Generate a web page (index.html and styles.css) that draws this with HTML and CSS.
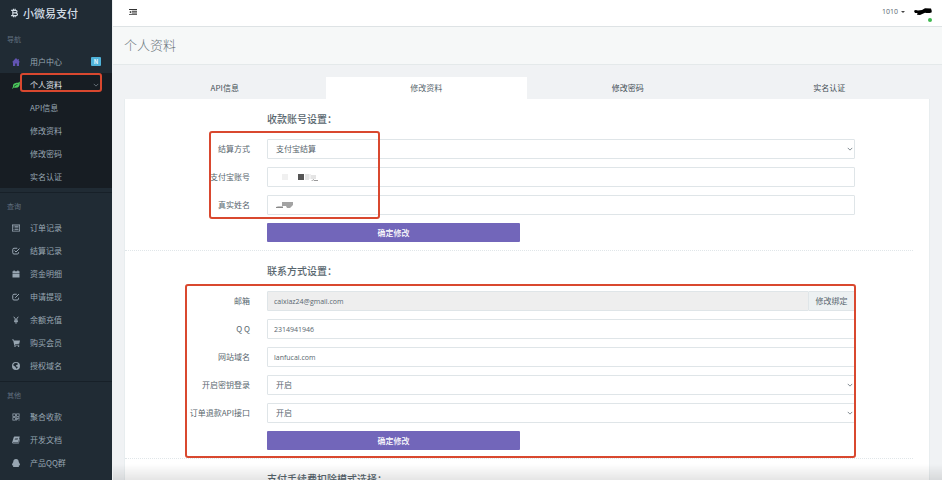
FILE: index.html
```html
<!DOCTYPE html>
<html lang="zh-CN">
<head>
<meta charset="utf-8">
<title>个人资料</title>
<link rel="stylesheet" href="styles.css">
</head>
<body>
<div class="app">
  <aside class="sidebar">
    <a class="brand" href="#"><svg class="brand-icon" viewBox="0 0 16 16" fill="none" stroke="currentColor" stroke-width="2"><path d="M2 3.3h7.3c4.4 0 4.4 4.5 0 4.5H5M5 3v10M2 12.7h7.8c4.8 0 4.6-4.9-.3-4.9M6.2.5v3M9.2.5v3M6.2 12.5v3M9.2 12.5v3"/></svg>小微易支付</a>
    <nav>
      <h2 class="nav-title">导航</h2>
      <ul class="nav">
        <li><a href="#"><svg class="icon violet" viewBox="0 0 16 16"><path d="M8 0 0 8.5h2V16h4.500v-5h3v5H14V8.500h2L13.500 5.700V2h-2v1.800z"/></svg>用户中心<span class="badge">N</span></a></li>
        <li class="open">
          <a class="current" href="#"><svg class="icon green" viewBox="0 0 16 16"><path fill-rule="evenodd" d="M15.500 1C16.500 8 14 14 7 13.500c-1.700-.1-2.700-.8-3.600-.5L1.300 15.500 0 14.300l2-2.300C1 5 7 4 10 3.700c3-.3 4-1 5.500-2.700zM4.500 11.300C6.500 9 8.500 7.800 11.500 7.300l-.2-1C8 6.800 5.500 8 3.800 10.500z"/></svg>个人资料<svg class="chevron" viewBox="0 0 8 8"><path d="m1 2.500 3 3 3-3"/></svg></a>
          <ul class="subnav">
            <li><a href="#">API信息</a></li>
            <li><a href="#">修改资料</a></li>
            <li><a href="#">修改密码</a></li>
            <li><a href="#">实名认证</a></li>
          </ul>
          <span class="mark mark-nav"></span>
        </li>
      </ul>
      <h2 class="nav-title ruled">查询</h2>
      <ul class="nav">
        <li><a href="#"><svg class="icon" viewBox="0 0 16 16"><path fill-rule="evenodd" d="M0 1h16v14H0zM1.500 3v10.500h13V3zM3 4h2v1.500H3zM6 4h7v1.500H6zM3 7h2v1.500H3zM6 7h7v1.500H6zM3 10h2v1.500H3zM6 10h7v1.500H6z"/></svg>订单记录</a></li>
        <li><a href="#"><svg class="icon line" viewBox="0 0 16 16"><path d="M10.500 2.500H4Q1.500 2.500 1.500 5v6.500Q1.500 14 4 14h6.500q2.500 0 2.500-2.500V10M5 7l3 3 7-7"/></svg>结算记录</a></li>
        <li><a href="#"><svg class="icon" viewBox="0 0 16 16"><path d="M1 2.500h2V1h2.500v1.500h5V1H13v1.500h2V6H1zM1 7h14v8H1z"/></svg>资金明细</a></li>
        <li><a href="#"><svg class="icon line" viewBox="0 0 16 16"><path d="M9.500 2.500H4Q1.500 2.500 1.500 5v6.500Q1.500 14 4 14h6.500q2.500 0 2.500-2.500V9.500M6.500 9.500l7.500-7.500"/></svg>申请提现</a></li>
        <li><a href="#"><svg class="icon line" viewBox="0 0 16 16"><path d="m3.500 1.500 4.500 6 4.500-6M8 7.500v8M4 8.300h8M4 11.300h8"/></svg>余额充值</a></li>
        <li><a href="#"><svg class="icon" viewBox="0 0 16 16"><path d="M0 1h3.500l.6 2H16l-1.500 6.500-8.800.8.3 1.200h8.500V13H4.500L2.400 2.500H0z"/><circle cx="6" cy="14.300" r="1.500"/><circle cx="13" cy="14.300" r="1.500"/></svg>购买会员</a></li>
        <li><a href="#"><svg class="icon" viewBox="0 0 16 16"><path fill-rule="evenodd" d="M8 0a8 8 0 1 0 0 16A8 8 0 0 0 8 0zm.5 1.500 3.500 1.800-1.500 2.700H8.800L7.500 8.500l3.500 1 .5 1.500-3 2.700-1.200-3L4.500 8 2.200 6.500C3.500 3 6 1.500 8.500 1.500z"/></svg>授权域名</a></li>
      </ul>
      <h2 class="nav-title ruled">其他</h2>
      <ul class="nav">
        <li><a href="#"><svg class="icon" viewBox="0 0 16 16"><path fill-rule="evenodd" d="M1 1h6.500v6.500H1zm1.500 1.500V6H6V2.500zM8.500 1H15v6.500H8.500zM10 2.500V6h3.500V2.500zM1 8.500h6.500V15H1zM2.500 10v3.500H6V10zM8.500 8.500h2v2h2v-2H15v3h-3V13h-2v2H8.500zM13 13h2v2h-2z"/></svg>聚合收款</a></li>
        <li><a href="#"><svg class="icon" viewBox="0 0 16 16"><path fill-rule="evenodd" d="M5 1h10.500L12.500 13H2.500c-.8 0-.8 1 0 1H13l2-8 1 .5L13.600 15H2.200C.5 15 0 13.500.5 12L3.500 2.500Q4 1 5 1zm1.500 3-.3 1H12l.3-1zM5.700 6.500l-.3 1h5.800l.3-1z"/></svg>开发文档</a></li>
        <li><a href="#"><svg class="icon" viewBox="0 0 16 16"><path d="M8 0c3.500 0 5.500 2.500 5.500 6C15.500 9 16.500 11 15.800 13l-1.500-.5-.8 1.200c1 .7.6 2.300-1 2.300h-9c-1.600 0-2-1.600-1-2.300l-.8-1.200L.2 13C-.5 11 .5 9 2.500 6 2.500 2.500 4.500 0 8 0z"/></svg>产品QQ群</a></li>
      </ul>
    </nav>
  </aside>
  <div class="main">
    <header class="topbar">
      <button class="toggle" type="button" aria-label="菜单"><svg viewBox="0 0 16 12"><path d="M0 0h16v2H0zM6 3.500h10v2H6zM6 7h10v2H6zM0 10.300h16v1.700H0zM4.500 3.300v5.500L.500 6z"/></svg></button>
      <button class="user" type="button">1010<span class="caret"></span><span class="avatar"><svg viewBox="0 0 18 8"><path d="M0 3Q1 1.500 4 2.500L8 2 11 .3 17 .5q1 2 .5 4-3 1-6.500.3L6 7 3 6.800 3.500 5 1 5z"/></svg><i class="status"></i></span></button>
    </header>
    <h1 class="page-title">个人资料</h1>
    <main class="content">
      <div class="tabs">
        <a href="#">API信息</a>
        <a class="active" href="#">修改资料</a>
        <a href="#">修改密码</a>
        <a href="#">实名认证</a>
      </div>
      <div class="panel">
        <form class="section">
          <h3>收款账号设置：</h3>
          <div class="row">
            <label for="method">结算方式</label>
            <div class="field"><select id="method"><option>支付宝结算</option></select><svg class="chevron" viewBox="0 0 8 8"><path d="m1 2.500 3 3 3-3"/></svg></div>
          </div>
          <div class="row">
            <label for="account">支付宝账号</label>
            <div class="field"><input id="account" type="text"><svg class="mask" viewBox="0 0 48 12"><path fill="#f0f0f0" d="M8 3h6v6H8zM31 3h6v5h-6z"/><path fill="#e4e4e4" d="M31 3h4v6h-4zM37 4h5v4h-5z"/><path fill="#555" d="M24 3h6v6h-6z"/><path fill="#999" d="m37 10 3-2v1l-2 1zM40 9h4v1h-4z"/></svg></div>
          </div>
          <div class="row">
            <label for="realname">真实姓名</label>
            <div class="field"><input id="realname" type="text"><svg class="mask" viewBox="0 0 48 12"><path fill="#a3a3a3" d="M8 3h11v3l-3 3h-3L12 7H8z"/><path fill="#888" d="m2 8 2-.5h5V9H2z"/></svg></div>
          </div>
          <div class="row"><button class="submit" type="submit">确定修改</button></div>
          <span class="mark mark-account"></span>
        </form>
        <form class="section">
          <h3>联系方式设置：</h3>
          <div class="row">
            <label for="email">邮箱</label>
            <div class="field"><input id="email" type="text" value="caixiaz24@gmail.com" disabled><button class="addon" type="button">修改绑定</button></div>
          </div>
          <div class="row">
            <label for="qq">Q Q</label>
            <div class="field"><input id="qq" type="text" value="2314941946"></div>
          </div>
          <div class="row">
            <label for="domain">网站域名</label>
            <div class="field"><input id="domain" type="text" value="lanfucai.com"></div>
          </div>
          <div class="row">
            <label for="keylogin">开启密钥登录</label>
            <div class="field"><select id="keylogin"><option>开启</option></select><svg class="chevron" viewBox="0 0 8 8"><path d="m1 2.500 3 3 3-3"/></svg></div>
          </div>
          <div class="row">
            <label for="refund">订单退款API接口</label>
            <div class="field"><select id="refund"><option>开启</option></select><svg class="chevron" viewBox="0 0 8 8"><path d="m1 2.500 3 3 3-3"/></svg></div>
          </div>
          <div class="row"><button class="submit" type="submit">确定修改</button></div>
          <span class="mark mark-contact"></span>
        </form>
        <section class="section">
          <h3>支付手续费扣除模式选择：</h3>
        </section>
      </div>
    </main>
  </div>
  <div class="fade"></div>
</div>
</body>
</html>
```
FILE: styles.css
```css
* { box-sizing: border-box; }
body {
  margin: 0;
  font: 8px/12px "Noto Sans CJK SC", sans-serif;
  color: #58666e;
  background: #f0f2f4;
}
a { color: inherit; text-decoration: none; }
ul { margin: 0; padding: 0; list-style: none; }
h1, h2, h3 { margin: 0; font-weight: 400; }
button, input, select { font: inherit; color: inherit; margin: 0; }
button { border: 0; background: none; padding: 0; }

.app { display: flex; height: 100vh; overflow: hidden; }

/* Sidebar */
.sidebar {
  flex: 0 0 113px;
  height: max-content;
  min-height: 100%;
  background: #202b34;
  color: #98a6b2;
  border-right: 1px solid #eef1f2;
}
.brand {
  display: flex;
  align-items: center;
  gap: 4px;
  height: 25px;
  padding-left: 10px;
  font-size: 11px;
  font-weight: 500;
  color: #d2dce4;
}
.brand-icon { width: 9px; height: 10px; }
.nav-title {
  height: 25px;
  padding: 2px 7px 0;
  font-size: 7px;
  line-height: 24px;
  color: #617080;
}
.nav-title.ruled {
  height: 24px;
  margin-top: 4px;
  padding-top: 1px;
  border-top: 1px solid #172028;
}
.nav a {
  position: relative;
  display: flex;
  align-items: center;
  height: 23px;
  padding: 0 11px 0 12px;
}
.icon { width: 8px; height: 8px; margin-right: 10px; fill: currentColor; }
.icon.line { fill: none; stroke: currentColor; stroke-width: 2; }
.icon.violet { color: #6254b2; }
.icon.green { color: #4cc95c; }
.badge {
  margin-left: auto;
  width: 10px;
  border-radius: 1px;
  background: #4fb3da;
  color: #e8f7fd;
  font-size: 6px;
  font-weight: 700;
  line-height: 9px;
  text-align: center;
}
.open { position: relative; background: #171d23; }
.nav .current { padding-right: 13px; color: #e4eaee; }
.current .chevron { margin-left: auto; color: #7d8790; }
.nav .subnav a { padding-left: 30px; }
.chevron {
  width: 6px;
  height: 6px;
  fill: none;
  stroke: currentColor;
  stroke-width: 1;
}

/* Highlight frames */
.mark {
  position: absolute;
  border: 2px solid #d9482f;
  border-radius: 3px;
  pointer-events: none;
}
.mark-nav { top: 0; left: 20px; right: 10px; height: 19px; }
.mark-account { left: 84px; width: 171px; top: 32px; height: 88px; }
.mark-contact { left: 60px; right: 57px; top: 33px; bottom: 0; }

/* Main column */
.main { flex: 1; min-width: 0; }
.topbar {
  display: flex;
  justify-content: space-between;
  align-items: center;
  height: 27px;
  padding: 0 10px 2px 16px;
  background: #fff;
  border-bottom: 1px solid #dee3e5;
}
.toggle svg { display: block; width: 8px; height: 6px; fill: #333; }
.user {
  display: flex;
  align-items: center;
  font: 7px/12px "Open Sans", sans-serif;
}
.caret {
  margin-left: 3px;
  border: 2px solid transparent;
  border-top-color: #444;
  border-bottom: 0;
}
.avatar { position: relative; margin-left: 9px; }
.avatar svg { display: block; width: 18px; height: 8px; }
.status {
  position: absolute;
  right: 0;
  top: 10px;
  width: 4px;
  height: 4px;
  border-radius: 50%;
  background: #3fb950;
}
.page-title {
  height: 38px;
  padding-left: 11px;
  border-bottom: 1px solid #e4e9ea;
  background: #f6f8f8;
  color: #69757c;
  font-size: 13px;
  font-weight: 300;
  line-height: 36px;
}
.content { padding: 12px 12px 0 11px; }
.tabs { display: grid; grid-template-columns: repeat(4, 1fr); }
.tabs a { line-height: 22px; text-align: center; color: #444f55; }
.tabs .active { background: #fff; color: #58666e; }
.panel {
  padding-right: 16px;
  background: #fff;
  border: 1px solid #e8edef;
  border-top: 0;
}
.section {
  position: relative;
  display: grid;
  gap: 8px;
  padding: 12px 58px 8px 0;
}
.section + .section { border-top: 1px dotted #e0e6e9; }
.section h3 {
  margin: 0 0 4px 142px;
  font-size: 10px;
  font-weight: 500;
  line-height: 16px;
}
.row {
  display: grid;
  grid-template-columns: 125px 1fr;
  column-gap: 17px;
  align-items: center;
}
.row label { text-align: right; white-space: nowrap; }
.field { position: relative; display: flex; }
.field input, .field select {
  flex: 1;
  min-width: 0;
  height: 20px;
  padding: 0 6px;
  border: 1px solid #dfe5e8;
  border-radius: 1px;
  background: #fff;
}
.field input { font: 7px/12px "Open Sans", sans-serif; }
.field input:disabled { background: #eee; }
.field select { appearance: none; padding-left: 8px; }
.field .chevron { position: absolute; right: 2px; top: 7px; }
.mask { position: absolute; left: 7px; top: 4px; width: 48px; height: 12px; }
.addon {
  width: 46px;
  border: 1px solid #dfe5e8;
  border-left: 0;
  background: #edf1f2;
}
.submit {
  grid-column: 2;
  width: 43%;
  height: 19px;
  border-radius: 1px;
  background: #7266ba;
  color: #fff;
  font-weight: 500;
}

/* Soft shade along the bottom edge of the window */
.fade {
  position: fixed;
  left: 113px;
  right: 0;
  bottom: 0;
  height: 16px;
  background: linear-gradient(transparent, rgba(0, 0, 0, .1));
  pointer-events: none;
}
```
